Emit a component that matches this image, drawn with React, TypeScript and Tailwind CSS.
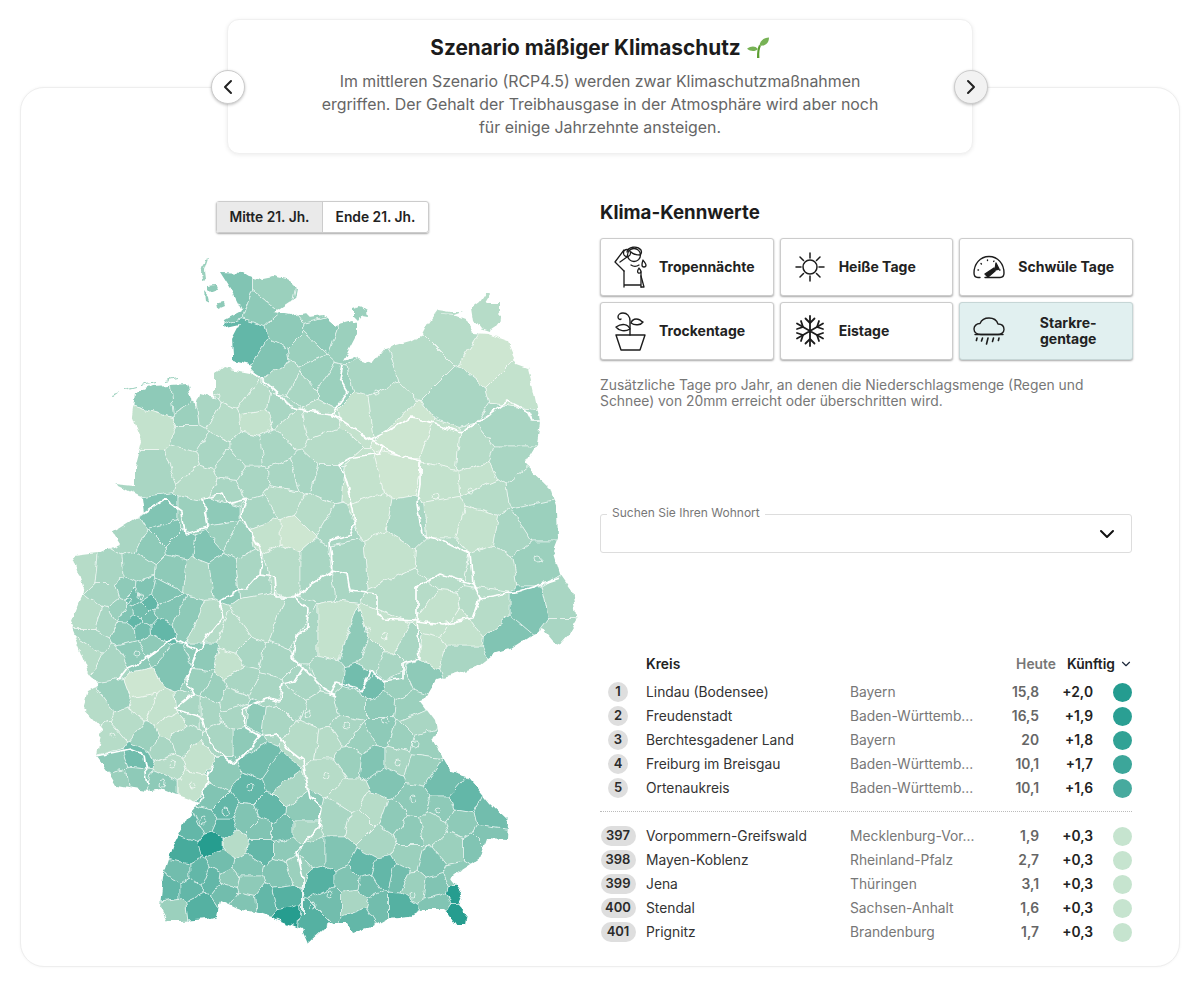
import { ChevronDown, ChevronLeft, ChevronRight } from "lucide-react";
import type { ReactNode } from "react";

type Pt = [number, number];

const font = { fontFamily: "Inter, 'Liberation Sans', sans-serif" };

const palette = [
  "#cde6d1", "#c3e2cd", "#b6dcc8", "#a9d6c3", "#9bd0bd", "#8ecab8", "#81c4b3",
  "#72bdad", "#64b7a8", "#55b1a2", "#46ab9c", "#37a496", "#289d8f",
];

// outline of the country, in page pixels
const outline: Pt[] = [
  [220, 271], [243, 272], [248, 275], [263, 278], [273, 276], [290, 280], [297, 287], [295, 297], [280, 307], [273, 312],
  [290, 315], [305, 312], [310, 317], [323, 315], [335, 325], [353, 320], [357, 322], [357, 333], [343, 360], [353, 357],
  [373, 362], [385, 347], [410, 340], [423, 333], [427, 325], [435, 313], [457, 315], [465, 318], [473, 332], [487, 333],
  [507, 340], [517, 363], [528, 367], [532, 383], [540, 420], [537, 443], [525, 463], [550, 487], [557, 510], [558, 537],
  [553, 550], [560, 573], [572, 590], [577, 620], [570, 632], [560, 643], [553, 640], [543, 628], [533, 633], [510, 648],
  [497, 652], [480, 665], [437, 678], [425, 698], [420, 700], [435, 720], [437, 730], [433, 740], [450, 770], [467, 775],
  [490, 803], [508, 820], [507, 838], [487, 837], [480, 857], [460, 870], [450, 878], [462, 893], [458, 903], [467, 913],
  [465, 925], [457, 925], [448, 912], [443, 908], [423, 908], [410, 915], [387, 917], [373, 925], [353, 932], [347, 922],
  [330, 922], [323, 928], [308, 942], [302, 928], [277, 918], [260, 912], [237, 908], [220, 900], [217, 915], [207, 918],
  [182, 920], [168, 920], [160, 905], [163, 877], [175, 840], [187, 817], [200, 802], [180, 795], [160, 787], [147, 790],
  [133, 788], [117, 785], [108, 770], [97, 755], [102, 728], [83, 707], [88, 690], [98, 685], [87, 668], [77, 643],
  [70, 625], [80, 600], [85, 590], [73, 555], [98, 552], [120, 543], [113, 532], [137, 517], [145, 512], [143, 497],
  [115, 483], [135, 485], [135, 467], [142, 440], [132, 415], [135, 393], [153, 385], [187, 383], [195, 407], [200, 393],
  [215, 397], [215, 373], [223, 367], [250, 372], [253, 365], [233, 360], [233, 353], [232, 338], [240, 323], [222, 327],
  [223, 320], [242, 310], [232, 290],
];

const islands: { d: string; c: number }[] = [
  { d: "M205 258l3-1-4 12 1 8-3 1-1-7z", c: 4 },
  { d: "M207 285l9-1 2 5-8 3-3-3z", c: 5 },
  { d: "M204 291l4 5 1 5-4-2z", c: 5 },
  { d: "M218 303l7-1 1 3-7 3z", c: 5 },
  { d: "M353 307l6-2 8 5 1 5-6-1-4 6-5-5z", c: 4 },
  { d: "M472 307l8-6 6-9 5 0-6 10 15 0 0 8-3 4 5 6-4 5-9 6-9-3-6-8z", c: 2 },
  { d: "M112 393l8-3-7 5z M124 388l12-3 0 1-12 3z M142 384l14-3 0 1-14 3z M164 379l14-3 0 1-14 3z", c: 4 },
  { d: "M435 313l3-4 13 2 12 0-8 3z", c: 2 },
];

// district seeds: x, y, palette index
const seeds: [number, number, number][] = [
  [235, 295, 6], [270, 295, 4], [285, 330, 5], [322, 332, 5], [345, 340, 4], [250, 340, 8], [273, 355, 6], [305, 350, 4],
  [315, 372, 4], [335, 385, 4], [287, 378, 3], [300, 385, 3], [262, 305, 5], [315, 305, 4], [165, 400, 5], [180, 398, 5],
  [190, 412, 4], [205, 410, 3], [235, 390, 2], [255, 405, 2], [280, 410, 3], [223, 420, 2], [257, 417, 1], [293, 425, 2],
  [327, 447, 2], [317, 420, 2], [360, 410, 1], [407, 437, 0], [400, 473, 0], [360, 483, 1], [443, 450, 1], [473, 453, 2],
  [507, 427, 3], [507, 463, 3], [527, 487, 3], [533, 520, 4], [480, 477, 1], [487, 493, 2], [437, 480, 1], [443, 517, 1],
  [477, 527, 1], [513, 533, 3], [533, 560, 4], [493, 567, 2], [443, 557, 2], [407, 520, 3], [370, 513, 1], [387, 553, 1],
  [343, 557, 3], [407, 597, 2], [490, 360, 0], [513, 383, 1], [460, 397, 3], [450, 333, 2], [423, 360, 2], [367, 377, 3],
  [380, 407, 2], [157, 470, 3], [157, 427, 1], [190, 437, 3], [183, 460, 2], [210, 450, 3], [230, 467, 3], [200, 480, 2],
  [250, 480, 3], [250, 450, 3], [287, 477, 3], [273, 447, 3], [303, 473, 3], [327, 480, 3], [283, 500, 2], [260, 513, 3],
  [293, 533, 0], [267, 533, 1], [313, 513, 2], [337, 527, 3], [283, 560, 2], [317, 560, 3], [227, 490, 3], [163, 517, 6],
  [193, 517, 4], [220, 513, 5], [223, 533, 4], [237, 540, 4], [207, 547, 6], [180, 543, 6], [150, 547, 5], [130, 537, 3],
  [167, 530, 6], [83, 567, 2], [110, 570, 3], [137, 567, 4], [173, 570, 5], [223, 570, 5], [250, 567, 3], [197, 573, 3],
  [158, 627, 8], [140, 610, 7], [167, 610, 6], [187, 620, 5], [120, 607, 4], [127, 630, 5], [142, 628, 7], [93, 640, 3],
  [93, 617, 2], [103, 620, 3], [110, 595, 3], [125, 590, 5], [133, 598, 7], [145, 592, 6], [150, 600, 8], [128, 612, 6],
  [135, 620, 8], [148, 618, 7], [160, 595, 6], [150, 643, 5], [133, 653, 5], [113, 663, 3], [87, 650, 2], [203, 657, 5],
  [177, 667, 6], [200, 680, 4], [230, 663, 1], [203, 627, 2], [237, 640, 2], [260, 623, 2], [287, 633, 3], [277, 657, 3],
  [247, 650, 3], [240, 680, 3], [267, 693, 3], [213, 690, 4], [233, 700, 3], [207, 707, 3], [193, 707, 3], [303, 643, 3],
  [333, 643, 1], [353, 650, 5], [370, 657, 3], [390, 637, 1], [410, 647, 3], [327, 673, 3], [303, 683, 3], [390, 667, 3],
  [420, 673, 5], [457, 657, 3], [430, 650, 1], [457, 633, 1], [510, 637, 6], [560, 630, 3], [533, 610, 6], [487, 610, 2],
  [437, 620, 1], [560, 605, 3], [360, 677, 7], [373, 687, 7], [397, 683, 4], [353, 703, 4], [380, 703, 5], [410, 707, 4],
  [320, 710, 3], [290, 700, 3], [257, 715, 5], [237, 713, 3], [273, 717, 3], [243, 740, 5], [223, 740, 3], [307, 740, 2],
  [327, 743, 2], [347, 730, 3], [380, 730, 5], [417, 723, 3], [403, 737, 4], [423, 743, 4], [360, 740, 4], [350, 757, 4],
  [373, 760, 6], [397, 760, 3], [420, 767, 4], [387, 780, 6], [327, 773, 2], [350, 797, 2], [373, 810, 2], [337, 817, 3],
  [360, 823, 2], [413, 800, 5], [443, 783, 7], [463, 800, 8], [490, 813, 7], [443, 807, 5], [410, 830, 5], [433, 827, 4],
  [460, 820, 5], [487, 837, 6], [450, 847, 4], [410, 857, 4], [430, 863, 6], [377, 840, 3], [393, 817, 5], [477, 847, 6],
  [320, 880, 9], [313, 853, 5], [337, 853, 6], [350, 880, 6], [353, 900, 3], [363, 867, 8], [367, 883, 7], [383, 873, 8],
  [400, 877, 7], [413, 883, 4], [397, 907, 9], [380, 907, 7], [360, 920, 8], [330, 900, 7], [310, 920, 9], [437, 887, 6],
  [457, 893, 12], [457, 912, 12], [440, 900, 6], [457, 878, 5], [287, 917, 12], [283, 897, 9], [267, 900, 8], [280, 873, 6],
  [260, 847, 8], [233, 843, 2], [287, 847, 5], [297, 867, 4], [247, 867, 6], [247, 883, 5], [230, 880, 5], [210, 877, 8],
  [220, 860, 7], [213, 843, 12], [185, 850, 10], [192, 827, 8], [223, 827, 9], [207, 820, 7], [223, 807, 8], [247, 817, 6],
  [270, 807, 8], [260, 830, 6], [283, 830, 7], [303, 810, 5], [303, 830, 3], [250, 787, 8], [277, 777, 7], [287, 790, 3],
  [257, 763, 7], [223, 773, 5], [213, 797, 6], [180, 873, 7], [200, 873, 8], [170, 887, 8], [200, 907, 9], [173, 910, 4],
  [190, 887, 8], [227, 890, 7], [243, 902, 6], [97, 710, 2], [118, 695, 4], [143, 703, 1], [140, 687, 0], [160, 710, 1],
  [127, 723, 2], [110, 737, 2], [147, 737, 4], [170, 727, 1], [163, 747, 3], [180, 740, 3], [197, 760, 1], [170, 767, 2],
  [193, 783, 1], [163, 783, 5], [137, 757, 7], [117, 763, 5], [135, 775, 5], [120, 777, 4],
];

// thick white lines between the Länder
const stateBorders = [
  "M137 517L165 498L182 510L185 533L207 527L203 498L223 493L227 503L247 498L242 513L250 530L263 553L260 573L247 588L240 587L220 600L223 617L210 633L195 655L187 680L193 693L175 708L203 717L210 740L217 750L233 763L248 750L260 735L277 733L290 750L303 760L310 797L322 807L318 827L297 850L303 877L303 913",
  "M242 366L262 378L283 397L287 405L307 410L332 413L370 438L393 427L410 417L427 420L460 432L480 420L507 400L527 410L532 420L540 420",
  "M343 363L340 377L348 390L332 413",
  "M370 438L383 447L397 453L420 460L420 483L417 503L422 533L443 540L470 553L473 583L480 597L503 593L520 590L560 577",
  "M293 597L313 582L333 570L330 540L350 533L355 523L353 507L347 480L340 463L350 457L380 452L383 447",
  "M260 573L275 575L277 597L293 597L308 608L307 627L295 637L292 657L303 667L323 687L337 695",
  "M333 570L347 573L350 590L377 593L377 610L383 618L417 620L443 623L473 617L480 597",
  "M417 587L417 620L420 657L403 663L403 677L383 680L370 670L363 690L337 682L330 693L337 695",
  "M417 587L440 573L473 583",
  "M303 667L295 680L283 683L280 700L270 697L243 707L245 727L260 735",
  "M117 680L127 667L143 660L173 637L197 650L193 660",
  "M97 755L130 748L143 753L148 783",
  "M213 763L200 802",
];

const cityRings: Pt[] = [
  [308, 712], [347, 725], [415, 743], [398, 762], [327, 775], [385, 720], [413, 798], [438, 810], [413, 895], [330, 893],
  [313, 905], [225, 810], [203, 820], [250, 787], [163, 783], [112, 735], [173, 763], [192, 785], [368, 630], [385, 635],
  [137, 653], [538, 558], [375, 392], [218, 395], [470, 490], [436, 495], [128, 600], [140, 595],
];

function clipHalf(poly: Pt[], a: Pt, b: Pt): Pt[] {
  // keep the part of poly nearer to a than to b
  const mx = (a[0] + b[0]) / 2;
  const my = (a[1] + b[1]) / 2;
  const nx = b[0] - a[0];
  const ny = b[1] - a[1];
  const side = (p: Pt) => (p[0] - mx) * nx + (p[1] - my) * ny;
  const out: Pt[] = [];
  for (let i = 0; i < poly.length; i++) {
    const p = poly[i];
    const q = poly[(i + 1) % poly.length];
    const sp = side(p);
    const sq = side(q);
    if (sp <= 0) out.push(p);
    if (sp < 0 !== sq < 0) {
      const t = sp / (sp - sq);
      out.push([p[0] + (q[0] - p[0]) * t, p[1] + (q[1] - p[1]) * t]);
    }
  }
  return out;
}

const cells = seeds.map((s, i) => {
  let poly: Pt[] = [[40, 240], [600, 240], [600, 960], [40, 960]];
  seeds.forEach((o, j) => {
    if (j !== i && poly.length) poly = clipHalf(poly, [s[0], s[1]], [o[0], o[1]]);
  });
  return { d: "M" + poly.map((p) => p[0].toFixed(1) + " " + p[1].toFixed(1)).join("L") + "Z", c: s[2] };
});

function GermanyMap() {
  return (
    <svg viewBox="60 250 530 700" className="block h-[700px] w-[530px]">
      <defs>
        <clipPath id="land">
          <polygon points={outline.map((p) => p.join(",")).join(" ")} />
        </clipPath>
        <filter id="wobble" x="0" y="0" width="100%" height="100%">
          <feTurbulence type="fractalNoise" baseFrequency="0.1" numOctaves="2" seed="7" />
          <feDisplacementMap in="SourceGraphic" scale="7" xChannelSelector="R" yChannelSelector="G" />
        </filter>
      </defs>
      <g filter="url(#wobble)">
        <g clipPath="url(#land)">
          {cells.map((c, i) => (
            <path key={i} d={c.d} fill={palette[c.c]} stroke="#fff" strokeOpacity="0.7" strokeWidth="0.7" />
          ))}
          {cityRings.map((p, i) => (
            <circle key={i} cx={p[0]} cy={p[1]} r="3" fill="none" stroke="#fff" strokeOpacity="0.8" strokeWidth="0.8" />
          ))}
          {stateBorders.map((d, i) => (
            <path key={i} d={d} fill="none" stroke="#fff" strokeWidth="1.7" strokeLinejoin="round" />
          ))}
        </g>
        {islands.map((s, i) => (
          <path key={i} d={s.d} fill={palette[s.c]} />
        ))}
      </g>
    </svg>
  );
}

function Seedling() {
  return (
    <svg viewBox="0 0 24 24" className="h-[24px] w-[24px]">
      <path d="M11 22C11 16 11.5 12 13 9l2 .6C13.5 13 13 17 13.4 22z" fill="#5c9e31" />
      <path d="M13.5 9.5C14 4.5 18 1.6 23 1.5c0 5-3 9-9.500 8z" fill="#77b255" />
      <path d="M12 13C9 9.500 5 9.800 1 12.800 4.500 15.500 9 16 12 13z" fill="#77b255" />
    </svg>
  );
}

const iconProps = {
  fill: "none",
  stroke: "#1c1c1c",
  strokeWidth: 1.3,
  strokeLinecap: "round" as const,
  strokeLinejoin: "round" as const,
};

function PersonIcon() {
  return (
    <svg viewBox="0 0 36 46" className="h-[46px] w-[36px] translate-x-[2px]" {...iconProps}>
      <circle cx="20" cy="11" r="6.500" />
      <path d="M13 8c1-5 10-7 14-2 1 2 0 4-1 5-3 0-7-1-9-3" />
      <circle cx="13" cy="9" r="3.500" />
      <path d="M10 6L1 18l9 9" />
      <path d="M13 13L6 18" />
      <path d="M10 27v16M10 41h17M27 28v15" />
      <path d="M17 21c3 2 5 2 8 0" />
      <path d="M29 16c2 3 3 4 3 5a2 2 0 0 1-4 0c0-1 0-2 1-5z" />
      <path d="M25 24c1 1.500 2 2.500 2 3.500a1.700 1.700 0 0 1-3.400 0c0-1 .4-2 1.400-3.500z" />
      <path d="M27 32l3 11h-3" />
    </svg>
  );
}

function SunIcon() {
  return (
    <svg viewBox="0 0 30 30" className="h-[30px] w-[30px]" {...iconProps} strokeWidth={1.5}>
      <circle cx="15" cy="15" r="7" />
      <path d="M15 1v5M15 24v5M1 15h5M24 15h5M5 5l3.500 3.500M21.500 21.500L25 25M25 5l-3.500 3.500M8.500 21.500L5 25" />
    </svg>
  );
}

function GaugeIcon() {
  return (
    <svg viewBox="0 0 32 24" className="h-[24px] w-[32px]" {...iconProps} strokeWidth={1.4}>
      <path d="M7 22.500H5C2.500 22.500 1 20.500 1 18 1 9 7 1.500 16 1.500S31 9 31 18c0 2.500-1.500 4.500-4 4.500H12" />
      <path d="M5 15h.5M8 8.500l.4.4M14.500 5v.5M21 6l-.3.500M27 15h-.500" />
      <path d="M12 19l9-6 1 3-7 6z" fill="#1c1c1c" />
      <path d="M23 8l3 6-4 1z" fill="#1c1c1c" />
    </svg>
  );
}

function PlantIcon() {
  return (
    <svg viewBox="0 0 34 42" className="h-[42px] w-[34px]" {...iconProps} strokeWidth={1.4}>
      <path d="M3 25h29l-5 15H8z" />
      <path d="M17 25V11c0-5-3-8-7-8-3 0-5 2-5 4s2 3 3 2" />
      <path d="M18 13c1-4 5-5 9-3 1 1 2 2 3 2-2 3-8 4-12 1z" />
      <path d="M17 19c-2-5-8-6-14-2 3 4 9 5 14 2z" />
    </svg>
  );
}

function SnowIcon() {
  return (
    <svg viewBox="0 0 30 32" className="h-[32px] w-[30px]" {...iconProps} strokeWidth={1.8}>
      <path d="M15 1v30M2 8.500l26 15M28 8.500l-26 15" />
      <path d="M10.500 3.500L15 8l4.500-4.500M10.500 28.500L15 24l4.500 4.500" />
      <path d="M2 14l6-2-2-6M28 18l-6 2 2 6M28 14l-6-2 2-6M2 18l6 2-2 6" />
    </svg>
  );
}

function RainIcon() {
  return (
    <svg viewBox="0 0 32 28" className="h-[28px] w-[32px]" {...iconProps} strokeWidth={1.4}>
      <path d="M8 17.500C4 17.500 1 15.500 1 12c0-3 2.500-5.500 6-5.500C8.500 3 12 1 16 1c5 0 8 3 9 6 3.500 0 6 2 6 5.500 0 3-3 5-6 5z" />
      <path d="M2 17.500h28" />
      <path d="M4 21l-.6 2.500M9.500 21l-1 3M15 21l-1.500 6M20.500 21l-1 3.500M26 21l-.6 2.500" strokeWidth={1.6} />
    </svg>
  );
}

const tiles: { label: ReactNode; icon: ReactNode; active?: boolean }[] = [
  { label: "Tropennächte", icon: <PersonIcon /> },
  { label: "Heiße Tage", icon: <SunIcon /> },
  { label: "Schwüle Tage", icon: <GaugeIcon /> },
  { label: "Trockentage", icon: <PlantIcon /> },
  { label: "Eistage", icon: <SnowIcon /> },
  {
    label: (
      <span className="block w-full pr-[14px] text-center">
        Starkre-
        <br />
        gentage
      </span>
    ),
    icon: <RainIcon />,
    active: true,
  },
];

const topRows = [
  { rank: "1", name: "Lindau (Bodensee)", state: "Bayern", today: "15,8", plus: "+2,0", color: "#249c90" },
  { rank: "2", name: "Freudenstadt", state: "Baden-Württemb...", today: "16,5", plus: "+1,9", color: "#2a9f93" },
  { rank: "3", name: "Berchtesgadener Land", state: "Bayern", today: "20", plus: "+1,8", color: "#31a295" },
  { rank: "4", name: "Freiburg im Breisgau", state: "Baden-Württemb...", today: "10,1", plus: "+1,7", color: "#3ca69a" },
  { rank: "5", name: "Ortenaukreis", state: "Baden-Württemb...", today: "10,1", plus: "+1,6", color: "#47aa9e" },
];

const bottomRows = [
  { rank: "397", name: "Vorpommern-Greifswald", state: "Mecklenburg-Vor...", today: "1,9", plus: "+0,3", color: "#c6e4cf" },
  { rank: "398", name: "Mayen-Koblenz", state: "Rheinland-Pfalz", today: "2,7", plus: "+0,3", color: "#c6e4cf" },
  { rank: "399", name: "Jena", state: "Thüringen", today: "3,1", plus: "+0,3", color: "#c6e4cf" },
  { rank: "400", name: "Stendal", state: "Sachsen-Anhalt", today: "1,6", plus: "+0,3", color: "#c6e4cf" },
  { rank: "401", name: "Prignitz", state: "Brandenburg", today: "1,7", plus: "+0,3", color: "#c6e4cf" },
];

type Row = (typeof topRows)[number];

function TableRow({ row }: { row: Row }) {
  const wide = row.rank.length > 1;
  return (
    <div className="flex h-6 items-center text-[13.8px]">
      <div className="flex w-[46px] justify-center pr-[10px]">
        <span
          className={`flex h-[20px] items-center justify-center rounded-full bg-[#dedede] text-[13px] font-semibold text-[#2a2a2a] ${
            wide ? "w-[35px]" : "w-[20px]"
          }`}
        >
          {row.rank}
        </span>
      </div>
      <span className="w-[204px] text-[#333]">{row.name}</span>
      <span className="w-[140px] text-[#777]">{row.state}</span>
      <span className="w-[49px] text-right font-semibold text-[#666]">{row.today}</span>
      <span className="w-[54px] text-right font-semibold text-[#222]">{row.plus}</span>
      <span className="ml-[20px] h-[19px] w-[19px] rounded-full" style={{ backgroundColor: row.color }} />
    </div>
  );
}

export default function App() {
  return (
    <div className="relative h-[985px] w-[1200px] overflow-hidden bg-white pt-[19px]" style={font}>
      {/* scenario card */}
      <div className="relative z-10 mx-auto flex h-[135px] w-[746px] flex-col items-center rounded-xl border border-[#f0f0f0] bg-white pt-[15px] shadow-[0_1px_4px_rgba(0,0,0,0.08)]">
        <h1 className="flex h-[26px] items-center gap-[5px] text-[20.8px] font-bold text-[#1c1c1c]">
          Szenario mäßiger Klimaschutz
          <Seedling />
        </h1>
        <p className="mt-[9px] w-[600px] text-center text-[15.9px] leading-[23px] text-[#666]">
          Im mittleren Szenario (RCP4.5) werden zwar Klimaschutzmaßnahmen
          <br />
          ergriffen. Der Gehalt der Treibhausgase in der Atmosphäre wird aber noch
          <br />
          für einige Jahrzehnte ansteigen.
        </p>
        <button className="absolute left-[-17px] top-[50px] flex h-[34px] w-[34px] items-center justify-center rounded-full border border-[#ccc] bg-white shadow-[0_1px_3px_rgba(0,0,0,0.25)]">
          <ChevronLeft size={24} color="#222" strokeWidth={2} />
        </button>
        <button className="absolute right-[-16px] top-[50px] flex h-[34px] w-[34px] items-center justify-center rounded-full border border-[#ccc] bg-[#f2f2f2] shadow-[0_1px_3px_rgba(0,0,0,0.25)]">
          <ChevronRight size={24} color="#222" strokeWidth={2} />
        </button>
      </div>

      {/* main panel */}
      <div className="mx-5 mt-[-67px] flex h-[880px] rounded-[24px] border border-[#eeeeee] bg-white shadow-[0_0_3px_rgba(0,0,0,0.05)]">
        <div className="flex w-[579px] shrink-0 flex-col pl-[39px] pt-[113px]">
          <div className="ml-[156px] flex h-[32px] w-[213px] rounded-[3px] border border-[#ccc] text-[13.8px] font-semibold text-[#222] shadow-[0_1px_2px_rgba(0,0,0,0.35)]">
            <span className="flex w-[106px] items-center justify-center border-r border-[#ccc] bg-[#eaeaea]">Mitte 21. Jh.</span>
            <span className="flex flex-1 items-center justify-center">Ende 21. Jh.</span>
          </div>
          <div className="mt-[18px]">
            <GermanyMap />
          </div>
        </div>

        <div className="w-[533px] shrink-0 pt-[112px]">
          <h2 className="h-[26px] text-[18.7px] font-bold leading-[26px] text-[#1c1c1c]">Klima-Kennwerte</h2>
          <div className="mt-[12px] grid grid-cols-3 gap-[6px]">
            {tiles.map((t, i) => (
              <div
                key={i}
                className={`flex h-[58px] items-center rounded-[3px] border text-[14px] font-bold text-[#222] shadow-[0_1px_2px_rgba(0,0,0,0.35)] ${
                  t.active ? "border-[#c6d6d6] bg-[#e1f0f0]" : "border-[#ccc] bg-white"
                }`}
              >
                <span className="flex w-[58px] shrink-0 items-center justify-center">{t.icon}</span>
                <span className="min-w-0 flex-1 leading-[16px]">{t.label}</span>
              </div>
            ))}
          </div>
          <p className="mt-[17px] text-[13.85px] leading-[16px] text-[#777]">
            Zusätzliche Tage pro Jahr, an denen die Niederschlagsmenge (Regen und
            <br />
            Schnee) von 20mm erreicht oder überschritten wird.
          </p>

          <div className="relative mt-[105px] flex h-[39px] w-[532px] items-center justify-end rounded-[3px] border border-[#ddd] pr-[12px]">
            <span className="absolute left-[6px] top-[-10px] bg-white px-[5px] text-[12px] leading-[16px] text-[#777]">
              Suchen Sie Ihren Wohnort
            </span>
            <ChevronDown size={24} color="#111" strokeWidth={2} />
          </div>

          <div className="mt-[100px] flex h-[22px] items-center text-[13.8px] font-semibold">
            <span className="ml-[46px] w-[369px] text-[#222]">Kreis</span>
            <span className="w-[41px] text-right text-[#777]">Heute</span>
            <span className="ml-[11px] text-[#222]">Künftig</span>
            <ChevronDown size={14} color="#1e293b" strokeWidth={2} className="ml-[4px]" />
          </div>
          <div className="mt-[5px]">
            {topRows.map((r) => (
              <TableRow key={r.rank} row={r} />
            ))}
          </div>
          <div className="mb-[12px] mt-[11px] w-[532px] border-t border-dotted border-[#bbb]" />
          <div>
            {bottomRows.map((r) => (
              <TableRow key={r.rank} row={r} />
            ))}
          </div>
        </div>
      </div>
    </div>
  );
}
